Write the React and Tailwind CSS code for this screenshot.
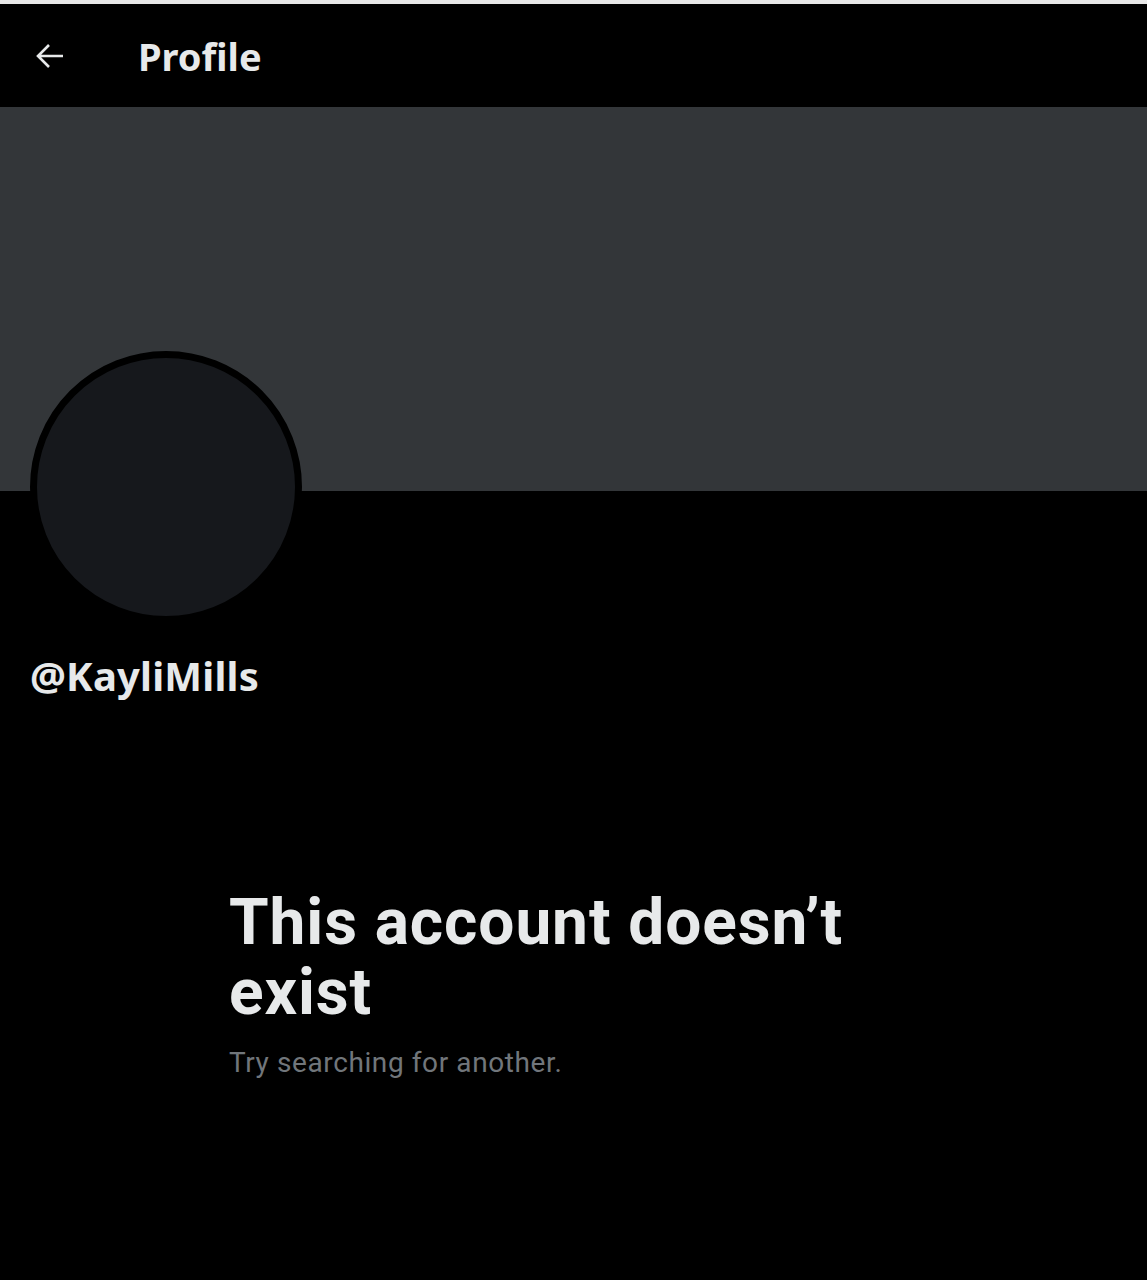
import React from "react";

export default function App() {
  return (
    <div className="w-[1147px] h-[1280px] bg-black overflow-hidden" style={{ fontFamily: "Roboto, 'Noto Sans', sans-serif" }}>
      <div className="h-[4px] bg-[#e8e8e8]" />
      <div className="h-[103px] flex items-center">
        <div className="w-[138px] pl-[35px] flex items-center">
          <svg width="30" height="30" viewBox="0 0 30 30" fill="none" stroke="#e7e9ea" strokeWidth="2.6">
            <path d="M28 15H3M14 4L3 15l11 11" />
          </svg>
        </div>
        <div className="text-[38px] font-bold text-[#e7e9ea] leading-none" style={{ fontFamily: "'Noto Sans', sans-serif" }}>Profile</div>
      </div>
      <div className="h-[384px] bg-[#333639]" />
      <div className="ml-[30px] mt-[-140px] w-[272px] h-[272px] rounded-full border-[7px] border-black bg-[#16181c]" />
      <div className="ml-[30px] mt-[29px] text-[40px] font-bold text-[#e7e9ea] leading-[48px] tracking-[0.2px]" style={{ fontFamily: "'Noto Sans', sans-serif" }}>@KayliMills</div>
      <div className="ml-[229px] mt-[188px] w-[660px]">
        <div className="text-[64px] font-bold text-[#e7e9ea] leading-[70px] tracking-[0.9px]">This account doesn’t exist</div>
        <div className="mt-[18px] text-[28px] text-[#71767b] leading-[34px] tracking-[0.6px]">Try searching for another.</div>
      </div>
    </div>
  );
}
